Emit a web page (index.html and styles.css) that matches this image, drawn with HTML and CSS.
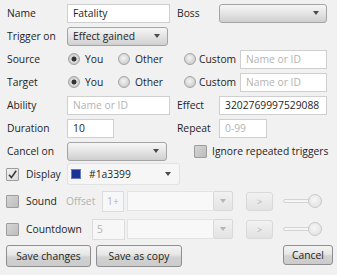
FILE: index.html
```html
<!DOCTYPE html>
<html>
<head>
<meta charset="utf-8">
<link rel="stylesheet" href="styles.css">
</head>
<body>
<div class="form">
  <div class="row">
    <span class="lbl">Name</span>
    <div class="input w-main">Fatality</div>
    <span class="lbl2">Boss</span>
    <div class="combo w-right"><span class="arrow"></span></div>
  </div>
  <div class="row">
    <span class="lbl">Trigger on</span>
    <div class="combo w-trig"><span class="ctext">Effect gained</span><span class="arrow"></span></div>
  </div>
  <div class="row">
    <span class="lbl">Source</span>
    <div class="opt opt-you"><span class="radio on"></span><span class="otext">You</span></div>
    <div class="opt opt-other"><span class="radio"></span><span class="otext">Other</span></div>
    <div class="opt opt-custom"><span class="radio"></span><span class="otext ctm">Custom</span></div>
    <div class="input w-cust ph">Name or ID</div>
  </div>
  <div class="row">
    <span class="lbl">Target</span>
    <div class="opt opt-you"><span class="radio on"></span><span class="otext">You</span></div>
    <div class="opt opt-other"><span class="radio"></span><span class="otext">Other</span></div>
    <div class="opt opt-custom"><span class="radio"></span><span class="otext ctm">Custom</span></div>
    <div class="input w-cust ph">Name or ID</div>
  </div>
  <div class="row">
    <span class="lbl">Ability</span>
    <div class="input w-main ph">Name or ID</div>
    <span class="lbl2">Effect</span>
    <div class="input w-right">3202769997529088</div>
  </div>
  <div class="row">
    <span class="lbl">Duration</span>
    <div class="input w-dur">10</div>
    <span class="lbl2 lbl2-dur">Repeat</span>
    <div class="input w-rep ph">0-99</div>
  </div>
  <div class="row">
    <span class="lbl">Cancel on</span>
    <div class="combo w-cancel"><span class="arrow"></span></div>
    <span class="check ign"></span><span class="chtext">Ignore repeated triggers</span>
  </div>
  <div class="row row-display">
    <div class="chkl w-disp"><span class="check on"><svg width="13" height="13" viewBox="0 0 13 13"><path d="M3 6.8 L5.4 9.6 L10.2 2.8" fill="none" stroke="#333" stroke-width="1.5"/></svg></span><span class="chtext2">Display</span></div>
    <div class="colorcombo"><span class="swatch"></span><span class="hex">#1a3399</span><span class="arrow"></span></div>
  </div>
  <div class="row row-sound">
    <div class="chkl w-sound"><span class="check"></span><span class="chtext2">Sound</span></div>
    <span class="dis w-offset">Offset</span>
    <div class="input dinput w-off">1+</div>
    <div class="dcombo"><div class="dfield"></div><div class="dbtn"><span class="arrow light"></span></div></div>
    <div class="dplay">&gt;</div>
    <div class="slider"><span class="track"></span><span class="thumb"></span></div>
  </div>
  <div class="row row-count">
    <div class="chkl w-count"><span class="check"></span><span class="chtext2">Countdown</span></div>
    <div class="input dinput w-cnt">5</div>
    <div class="dcombo"><div class="dfield"></div><div class="dbtn"><span class="arrow light"></span></div></div>
    <div class="dplay">&gt;</div>
    <div class="slider"><span class="track"></span><span class="thumb"></span></div>
  </div>
  <div class="row row-btns">
    <div class="btn b-save">Save changes</div>
    <div class="btn b-copy">Save as copy</div>
    <div class="btn b-cancel">Cancel</div>
  </div>
</div>
</body>
</html>
```
FILE: styles.css
```css
html, body {
  margin: 0;
  padding: 0;
}
body {
  width: 337px;
  height: 275px;
  overflow: hidden;
  background: #f1f1f1;
  font-family: "Open Sans", "Noto Sans", sans-serif;
  font-size: 10.3px;
  color: #1e1e1e;
}
.form {
  display: flex;
  flex-direction: column;
  padding: 3px 4px 0 7px;
}
.row {
  display: flex;
  align-items: center;
  height: 20px;
  margin-bottom: 3px;
  white-space: nowrap;
}
.lbl {
  width: 60px;
  flex: none;
}
.lbl2 {
  width: 42px;
  margin-left: 7px;
  flex: none;
}
.lbl2-dur {
  margin-left: 63px;
}
.input {
  box-sizing: border-box;
  height: 19px;
  background: #fff;
  border: 1px solid #cfcfcf;
  padding-left: 5px;
  display: flex;
  align-items: center;
  flex: none;
}
.ph {
  color: #b3b3b3;
}
.w-main { width: 103px; }
.w-right { width: 108px; }
.w-cust { width: 87px; }
.w-dur { width: 47px; }
.w-rep { width: 48px; }

.combo {
  box-sizing: border-box;
  height: 19px;
  border: 1px solid #a4a4a4;
  border-radius: 3px;
  background: linear-gradient(#f6f6f6, #e4e4e4 50%, #cfcfcf);
  display: flex;
  align-items: center;
  position: relative;
  flex: none;
  padding-left: 5px;
}
.w-trig { width: 101px; }
.w-cancel { width: 100px; }
.arrow {
  position: absolute;
  right: 7px;
  top: 50%;
  margin-top: -2px;
  width: 0;
  height: 0;
  border-left: 3.5px solid transparent;
  border-right: 3.5px solid transparent;
  border-top: 4px solid #4a4a4a;
}
.arrow.light {
  border-top-color: #b5b5b5;
  right: 7px;
}

.opt {
  display: flex;
  align-items: center;
  flex: none;
}
.opt-you { width: 49px; }
.opt-other { width: 66px; }
.opt-custom { width: 58px; }
.radio {
  box-sizing: border-box;
  width: 12px;
  height: 12px;
  border-radius: 50%;
  border: 1px solid #a3a3a3;
  background: radial-gradient(circle at 45% 40%, #f4f4f4, #d0d0d0 70%, #bdbdbd);
  margin-left: 2px;
  flex: none;
}
.opt-you .radio { margin-left: 1px; }
.radio.on {
  background: radial-gradient(circle at 50% 50%, #2b2b2b 0, #3a3a3a 2.2px, #d8d8d8 2.8px, #c4c4c4 100%);
}
.otext {
  margin-left: 5px;
}
.otext.ctm {
  margin-left: 3px;
}

.check {
  box-sizing: border-box;
  width: 13px;
  height: 13px;
  border: 1px solid #9d9d9d;
  border-radius: 1px;
  background: linear-gradient(135deg, #d6d6d6, #bcbcbc);
  flex: none;
  display: block;
}
.check svg {
  display: block;
  margin: -1px;
}
.check.on {
  background: linear-gradient(135deg, #f0f0f0, #dcdcdc);
}
.check.ign {
  margin-left: 27px;
}
.chtext {
  margin-left: 5px;
}
.chkl {
  display: flex;
  align-items: center;
  margin-left: -1px;
  flex: none;
}
.chtext2 {
  margin-left: 7px;
}
.w-disp { width: 61px; }
.w-sound { width: 60px; }
.w-count { width: 86px; }

.row-display {
  margin-bottom: 7px;
}
.colorcombo {
  box-sizing: border-box;
  width: 113px;
  height: 22px;
  border: 1px solid #e2e2e2;
  border-radius: 3px;
  background: #f6f6f6;
  position: relative;
  display: flex;
  align-items: center;
  flex: none;
}
.swatch {
  width: 8px;
  height: 8px;
  background: #1a3399;
  margin-left: 4px;
  box-shadow: 0 0 0 1px #6b7bb8;
}
.hex {
  margin-left: 9px;
}
.colorcombo .arrow {
  right: 8px;
}

.row-sound {
  margin-bottom: 8px;
}
.row-count {
  margin-bottom: 6px;
}
.dis {
  color: #b3b3b3;
}
.w-offset {
  width: 36px;
  flex: none;
}
.dinput {
  background: #f7f7f7;
  border-color: #dcdcdc;
  color: #b3b3b3;
  height: 21px;
  margin-right: 3px;
}
.w-off { width: 22px; padding-left: 4px; }
.w-cnt { width: 33px; margin-left: 0; margin-right: 2px; padding-left: 4px; }
.dcombo {
  display: flex;
  height: 20px;
  flex: none;
}
.dfield {
  width: 86px;
  box-sizing: border-box;
  border: 1px solid #e3e3e3;
  border-right: none;
  background: #f8f8f8;
}
.dbtn {
  width: 20px;
  box-sizing: border-box;
  border: 1px solid #d9d9d9;
  border-radius: 2px;
  background: linear-gradient(#f2f2f2, #e3e3e3);
  position: relative;
}
.dbtn .arrow {
  right: 6px;
}
.dplay {
  box-sizing: border-box;
  width: 27px;
  height: 19px;
  margin-left: 13px;
  border: 1px solid #d9d9d9;
  border-radius: 3px;
  background: linear-gradient(#f2f2f2, #e2e2e2);
  color: #b0b0b0;
  font-size: 9px;
  display: flex;
  align-items: center;
  justify-content: center;
  flex: none;
}
.slider {
  position: relative;
  width: 40px;
  height: 14px;
  margin-left: 10px;
  flex: none;
}
.track {
  position: absolute;
  left: 0;
  right: 8px;
  top: 5px;
  height: 4px;
  box-sizing: border-box;
  border: 1px solid #d3d3d3;
  border-radius: 2px;
  background: #f5f5f5;
}
.thumb {
  position: absolute;
  right: 1px;
  top: 0;
  width: 14px;
  height: 14px;
  box-sizing: border-box;
  border-radius: 50%;
  border: 1px solid #c8c8c8;
  background: radial-gradient(circle at 45% 40%, #f6f6f6, #dedede);
}

.row-btns {
  height: 22px;
  width: 326px;
}
.btn {
  box-sizing: border-box;
  height: 22px;
  border: 1px solid #8e8e8e;
  border-radius: 3px;
  background: linear-gradient(#f4f4f4, #e6e6e6 45%, #d2d2d2 55%, #cbcbcb);
  display: flex;
  align-items: center;
  justify-content: center;
  flex: none;
}
.b-save {
  width: 85px;
  margin-left: -1px;
}
.b-copy {
  width: 86px;
  margin-left: 5px;
}
.b-cancel {
  width: 50px;
  height: 20px;
  margin-left: auto;
  margin-top: -2px;
}
```
